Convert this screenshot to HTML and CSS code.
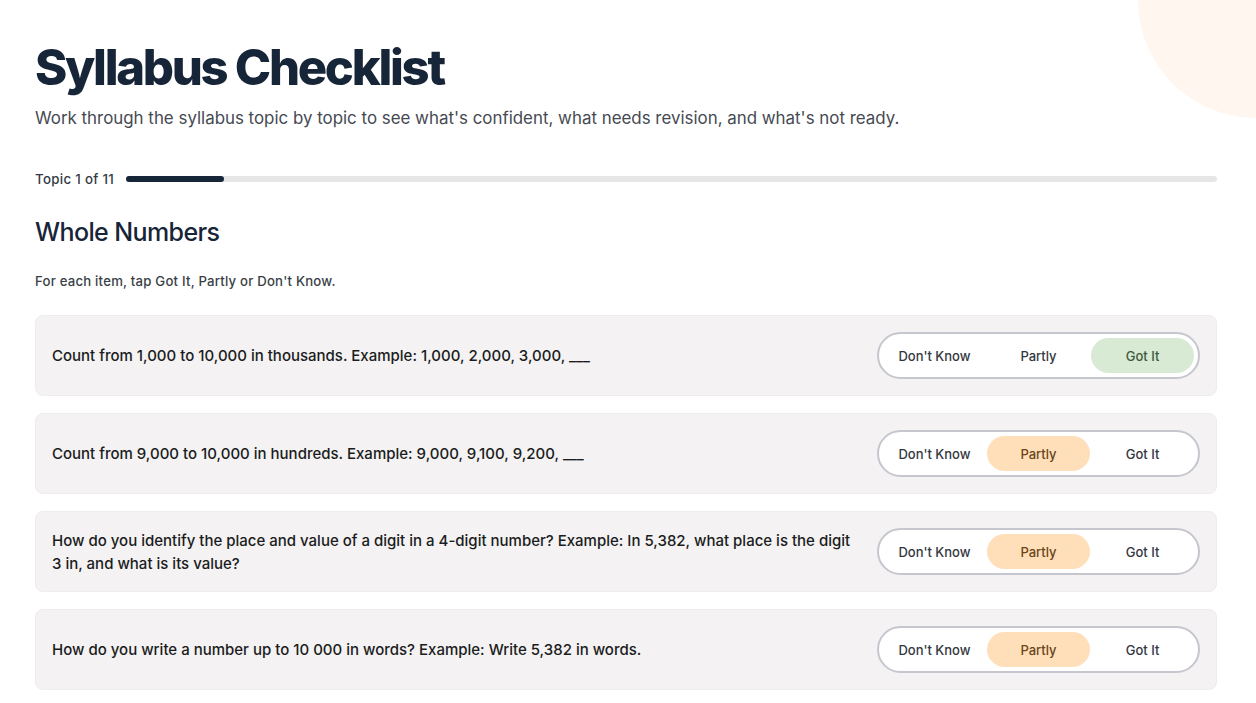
FILE: index.html
```html
<!DOCTYPE html>
<html lang="en">
<head>
    <meta charset="UTF-8">
    <title>Syllabus Checklist</title>
    <link rel="stylesheet" href="styles.css">
</head>
<body>
    <div class="blob"></div>
    <div class="page">
        <h1 class="title">Syllabus Checklist</h1>
        <p class="intro">Work through the syllabus topic by topic to see what's confident, what needs revision, and what's not ready.</p>

        <div class="progress">
            <span class="progress-label">Topic 1 of 11</span>
            <div class="progress-track"><div class="progress-fill" style="width: 9%;"></div></div>
        </div>

        <h2 class="topic">Whole Numbers</h2>
        <p class="hint">For each item, tap Got It, Partly or Don't Know.</p>

        <div class="items">
            <div class="item">
                <div class="item-text">Count from 1,000 to 10,000 in thousands. Example: 1,000, 2,000, 3,000, ___</div>
                <div class="toggle">
                    <button class="opt">Don't Know</button>
                    <button class="opt">Partly</button>
                    <button class="opt got">Got It</button>
                </div>
            </div>
            <div class="item">
                <div class="item-text">Count from 9,000 to 10,000 in hundreds. Example: 9,000, 9,100, 9,200, ___</div>
                <div class="toggle">
                    <button class="opt">Don't Know</button>
                    <button class="opt partly">Partly</button>
                    <button class="opt">Got It</button>
                </div>
            </div>
            <div class="item">
                <div class="item-text">How do you identify the place and value of a digit in a 4-digit number? Example: In 5,382, what place is the digit 3 in, and what is its value?</div>
                <div class="toggle">
                    <button class="opt">Don't Know</button>
                    <button class="opt partly">Partly</button>
                    <button class="opt">Got It</button>
                </div>
            </div>
            <div class="item">
                <div class="item-text">How do you write a number up to 10 000 in words? Example: Write 5,382 in words.</div>
                <div class="toggle">
                    <button class="opt">Don't Know</button>
                    <button class="opt partly">Partly</button>
                    <button class="opt">Got It</button>
                </div>
            </div>
        </div>
    </div>
</body>
</html>
```

FILE: styles.css
```css
html, body {
    margin: 0;
    background: #ffffff;
    font-family: Inter, "Noto Sans", sans-serif;
    color: #1b2433;
    overflow: hidden;
}

/* soft quarter circle in the top right corner */
.blob {
    position: absolute;
    top: 0;
    right: 0;
    width: 118px;
    height: 118px;
    border-bottom-left-radius: 118px;
    background: #fef6ef;
}

.page {
    position: relative;
    padding: 38px 39px 0 35px;
}

.title {
    margin: 0;
    font-size: 49px;
    font-weight: 800;
    letter-spacing: -2.3px;
    line-height: 60px;
    color: #172538;
}

.intro {
    margin: 8px 0 0;
    font-size: 16.9px;
    color: #454a52;
    line-height: 24px;
}

.progress {
    display: flex;
    align-items: center;
    gap: 12px;
    margin-top: 41px;
}

.progress-label {
    font-size: 13.3px;
    font-weight: 500;
    letter-spacing: 0.3px;
    color: #333a44;
}

.progress-track {
    flex: 1;
    height: 6px;
    border-radius: 3px;
    background: #e6e6e6;
}

.progress-fill {
    height: 100%;
    border-radius: 3px;
    background: #172538;
}

.topic {
    margin: 29px 0 0;
    font-size: 25px;
    font-weight: 500;
    letter-spacing: -0.6px;
    line-height: 32px;
    color: #172538;
}

.hint {
    margin: 25px 0 0;
    font-size: 13.2px;
    font-weight: 500;
    letter-spacing: 0.2px;
    color: #3a3f47;
}

.items {
    display: flex;
    flex-direction: column;
    gap: 17px;
    margin-top: 26px;
}

.item {
    display: flex;
    align-items: center;
    gap: 24px;
    padding: 16px;
    background: #f4f2f3;
    border: 1px solid #eeecec;
    border-radius: 8px;
}

.item-text {
    flex: 1;
    font-size: 15px;
    font-weight: 500;
    line-height: 23px;
    color: #1a1c20;
}

.toggle {
    display: flex;
    gap: 1px;
    padding: 4px;
    background: #ffffff;
    border: 2px solid #c6c6ce;
    border-radius: 24px;
}

.opt {
    width: 103px;
    height: 35px;
    border: none;
    border-radius: 18px;
    background: transparent;
    font-family: Inter, "Noto Sans", sans-serif;
    font-size: 13px;
    font-weight: 500;
    color: #33383f;
    cursor: pointer;
}

.opt.got {
    background: #d8ead3;
    color: #3d5a40;
}

.opt.partly {
    background: #ffdfb9;
    color: #6a4518;
}
```
